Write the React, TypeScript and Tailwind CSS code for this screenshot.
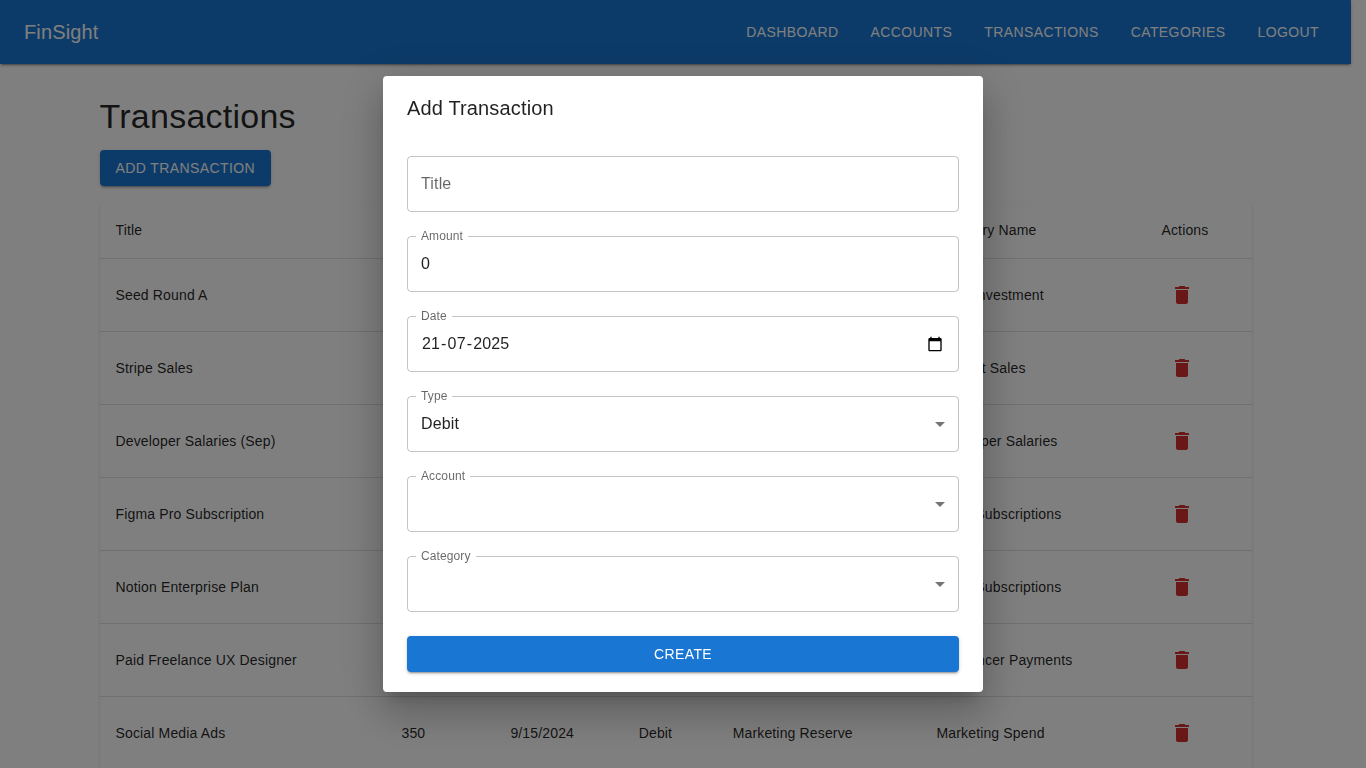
import type { ReactNode } from "react";

type Row = {
  title: string;
  amount?: string;
  date?: string;
  type?: string;
  account?: string;
  category: string;
};

const NAV = ["Dashboard", "Accounts", "Transactions", "Categories", "Logout"];

const HEADERS = ["Title", "", "Date", "Type", "Account Name", "Category Name", "Actions"];

const ROWS: Row[] = [
  { title: "Seed Round A", category: "Seed Investment" },
  { title: "Stripe Sales", category: "Product Sales" },
  { title: "Developer Salaries (Sep)", category: "Developer Salaries" },
  { title: "Figma Pro Subscription", category: "SaaS Subscriptions" },
  { title: "Notion Enterprise Plan", category: "SaaS Subscriptions" },
  { title: "Paid Freelance UX Designer", category: "Freelancer Payments" },
  {
    title: "Social Media Ads",
    amount: "350",
    date: "9/15/2024",
    type: "Debit",
    account: "Marketing Reserve",
    category: "Marketing Spend",
  },
];

const GRID = "grid grid-cols-[286px_108.9px_128.3px_94px_203.8px_225px_1fr] border-b border-[#e0e0e0]";

const RAISED =
  "shadow-[0_3px_1px_-2px_rgba(0,0,0,0.2),0_2px_2px_0_rgba(0,0,0,0.14),0_1px_5px_0_rgba(0,0,0,0.12)]";

function TrashIcon() {
  return (
    <svg viewBox="0 0 24 24" className="size-6 fill-[#d32f2f]" aria-hidden="true">
      <path d="M6 19c0 1.1.9 2 2 2h8c1.1 0 2-.9 2-2V7H6zM19 4h-3.5l-1-1h-5l-1 1H5v2h14z" />
    </svg>
  );
}

function CalendarIcon() {
  return (
    <svg viewBox="0 0 24 24" className="mt-[3.5px] size-4 fill-black" aria-hidden="true">
      <path d="M20 3h-1V1h-2v2H7V1H5v2H4c-1.1 0-2 .9-2 2v16c0 1.1.9 2 2 2h16c1.1 0 2-.9 2-2V5c0-1.1-.9-2-2-2zm0 18H4V8h16v13z" />
    </svg>
  );
}

function ArrowIcon() {
  return (
    <svg viewBox="0 0 24 24" className="mt-[5px] -mr-[7px] size-6 fill-black/54" aria-hidden="true">
      <path d="M7 10l5 5 5-5z" />
    </svg>
  );
}

function Field({ label, value, icon }: { label: string; value?: ReactNode; icon?: ReactNode }) {
  return (
    <fieldset className="-mt-[5px] h-[61px] rounded border border-black/23 px-2">
      <legend className="h-[11px] px-[5px] text-xs leading-[11px] tracking-[0.00938em] whitespace-nowrap text-black/60">
        {label}
      </legend>
      <div className="flex justify-between pt-[5px] pr-[5px] pl-[5px]">
        <div className="pt-[5.5px] leading-[23px] tracking-[0.00938em] text-black/87">{value}</div>
        {icon}
      </div>
    </fieldset>
  );
}

function Cell({ children }: { children?: ReactNode }) {
  return <div className="flex items-center px-4 whitespace-nowrap">{children}</div>;
}

function Page() {
  return (
    <div className="w-[1351px]">
      <header className="flex h-16 items-center justify-between bg-[#1976d2] px-6 text-white shadow-[0_3px_1px_-2px_rgba(0,0,0,0.2),0_2px_2px_0_rgba(0,0,0,0.14),0_1px_5px_0_rgba(0,0,0,0.12)]">
        <div className="text-xl leading-8 tracking-[0.0075em]">FinSight</div>
        <nav className="flex gap-4">
          {NAV.map((item) => (
            <button
              key={item}
              className="px-2 py-1.5 text-sm leading-[24.5px] tracking-[0.02857em] uppercase"
            >
              {item}
            </button>
          ))}
        </nav>
      </header>
      <main className="mx-auto mt-8 w-[1152px] text-black/87">
        <h1 className="mb-3.5 text-[34px] leading-[40px] tracking-[0.00735em]">Transactions</h1>
        <button
          className={`block h-9 rounded bg-[#1976d2] px-4 text-sm leading-[24px] tracking-[0.02857em] text-white uppercase ${RAISED}`}
        >
          Add Transaction
        </button>
        <section className="mt-4 rounded bg-white text-sm tracking-[0.01071em] shadow-[0_2px_1px_-1px_rgba(0,0,0,0.2),0_1px_1px_0_rgba(0,0,0,0.14),0_1px_3px_0_rgba(0,0,0,0.12)]">
          <div className={`${GRID} h-[57px]`}>
            {HEADERS.map((h) => (
              <Cell key={h}>{h}</Cell>
            ))}
          </div>
          {ROWS.map((r) => (
            <div key={r.title} className={`${GRID} h-[73px]`}>
              <Cell>{r.title}</Cell>
              <Cell>{r.amount}</Cell>
              <Cell>{r.date}</Cell>
              <Cell>{r.type}</Cell>
              <Cell>{r.account}</Cell>
              <Cell>{r.category}</Cell>
              <Cell>
                <button className="ml-[0.5px] p-2" aria-label="Delete">
                  <TrashIcon />
                </button>
              </Cell>
            </div>
          ))}
        </section>
      </main>
    </div>
  );
}

function AddTransactionDialog() {
  return (
    <div
      role="dialog"
      className="w-[600px] rounded bg-white text-black/87 shadow-[0_11px_15px_-7px_rgba(0,0,0,0.2),0_24px_38px_3px_rgba(0,0,0,0.14),0_9px_46px_8px_rgba(0,0,0,0.12)]"
    >
      <h2 className="px-6 py-4 text-xl leading-8 tracking-[0.0075em]">Add Transaction</h2>
      <div className="flex flex-col gap-6 px-6 pt-4 pb-5">
        <div className="flex h-14 items-center rounded border border-black/23 px-[13px] leading-[23px] tracking-[0.00938em] text-black/60">
          Title
        </div>
        <Field label="Amount" value="0" />
        <Field
          label="Date"
          value={
            <>
              <span className="px-px">21</span>-<span className="px-px">07</span>-
              <span className="px-px">2025</span>
            </>
          }
          icon={
            <span className="flex pt-[5.5px] pr-0.5">
              <CalendarIcon />
            </span>
          }
        />
        <Field label="Type" value="Debit" icon={<ArrowIcon />} />
        <Field label="Account" icon={<ArrowIcon />} />
        <Field label="Category" icon={<ArrowIcon />} />
        <button
          className={`rounded bg-[#1976d2] py-1.5 text-sm leading-[24.5px] tracking-[0.02857em] text-white uppercase ${RAISED}`}
        >
          Create
        </button>
      </div>
    </div>
  );
}

export default function App() {
  return (
    <div className="h-screen overflow-hidden bg-white font-['Liberation_Sans',Arial,sans-serif]">
      <Page />
      <div className="fixed inset-0 flex items-center justify-center bg-black/50">
        <AddTransactionDialog />
      </div>
    </div>
  );
}
